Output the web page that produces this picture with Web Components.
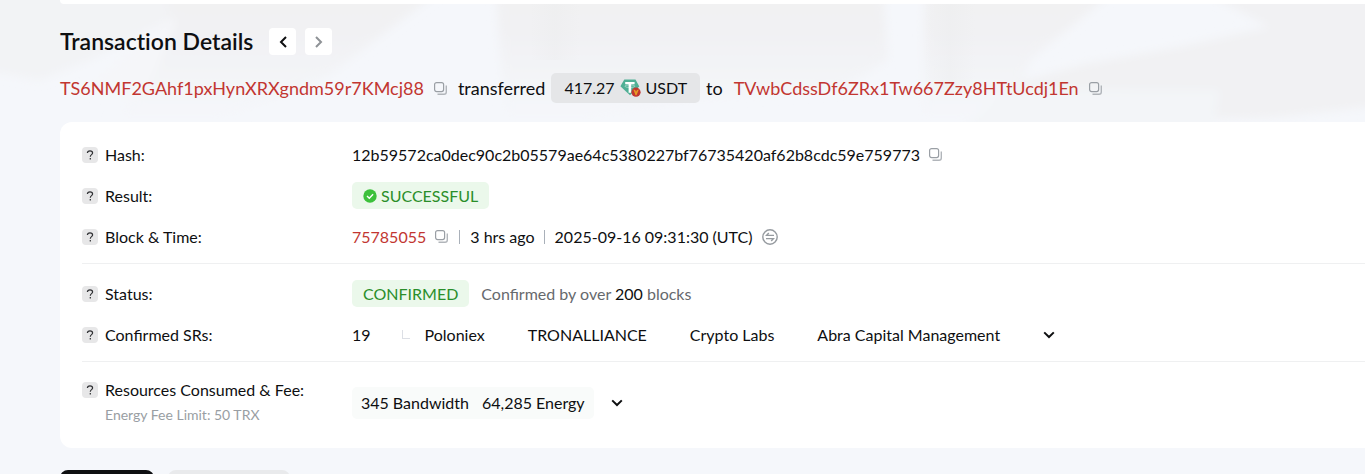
<!DOCTYPE html>
<html lang="en">
<head>
<meta charset="utf-8">
<meta name="viewport" content="width=device-width, initial-scale=1">
<title>Transaction Details</title>
<style>
	body {
		margin: 0;
		background: #f5f7fb;
		color: #0e0f11;
		font: 16px/24px Lato, "Liberation Sans", sans-serif;
	}
</style>
</head>
<body>
<tx-page>
	<tx-header slot="header" heading="Transaction Details">
		<tx-address>TS6NMF2GAhf1pxHynXRXgndm59r7KMcj88</tx-address>
		<span>transferred</span>
		<token-amount amount="417.27">USDT</token-amount>
		<span>to</span>
		<tx-address>TVwbCdssDf6ZRx1Tw667Zzy8HTtUcdj1En</tx-address>
	</tx-header>
	<detail-card>
		<detail-group>
			<detail-row label="Hash">
				<copy-text>12b59572ca0dec90c2b05579ae64c5380227bf76735420af62b8cdc59e759773</copy-text>
			</detail-row>
			<detail-row label="Result">
				<status-pill checked>SUCCESSFUL</status-pill>
			</detail-row>
			<detail-row label="Block &amp; Time">
				<block-time block="75785055" age="3 hrs ago">2025-09-16 09:31:30 (UTC)</block-time>
			</detail-row>
		</detail-group>
		<detail-group>
			<detail-row label="Status">
				<status-pill>CONFIRMED</status-pill>
				<confirm-note blocks="200"></confirm-note>
			</detail-row>
			<detail-row label="Confirmed SRs">
				<sr-list count="19" names="Poloniex,TRONALLIANCE,Crypto Labs,Abra Capital Management"></sr-list>
			</detail-row>
		</detail-group>
		<detail-group>
			<detail-row label="Resources Consumed &amp; Fee" note="Energy Fee Limit: 50 TRX">
				<resource-box bandwidth="345" energy="64,285"></resource-box>
			</detail-row>
		</detail-group>
	</detail-card>
	<tx-tabs slot="tabs"></tx-tabs>
</tx-page>

<script>
const buttonReset = `
	button {
		display: flex;
		align-items: center;
		justify-content: center;
		margin: 0;
		padding: 0;
		border: 0;
		background: none;
		color: inherit;
		font: inherit;
		cursor: pointer;
	}
	svg {
		display: block;
	}
`;

const chevronDown = `<svg width="12" height="8" viewBox="0 0 12 8" fill="none" stroke="#0e0f11" stroke-width="2"><path d="M1.2 1.4 6 6l4.8-4.6"/></svg>`;

class TxElement extends HTMLElement {
	constructor() {
		super();
		this.attachShadow({ mode: "open" });
	}

	connectedCallback() {
		this.shadowRoot.innerHTML = `<style>${buttonReset}${this.style_()}</style>${this.content()}`;
	}

	attr(name) {
		return (this.getAttribute(name) ?? "").replace(/&/g, "&amp;");
	}
}

class TxPage extends TxElement {
	style_() {
		return `
			:host {
				display: block;
				position: relative;
				box-sizing: border-box;
				height: 100vh;
				padding-left: 60px;
				overflow: hidden;
			}
			.backdrop {
				position: absolute;
				top: 0;
				left: 0;
				width: 100%;
				height: 122px;
				z-index: -1;
			}
			.menu {
				height: 4px;
				background: #fff;
				border-radius: 0 0 0 4px;
			}
		`;
	}

	content() {
		return `
			<svg class="backdrop" viewBox="0 0 1365 122" preserveAspectRatio="none" aria-hidden="true">
				<defs>
					<linearGradient id="down" x2="0" y2="1">
						<stop offset="0" stop-color="#f1f1f2"/>
						<stop offset=".35" stop-color="#f1f1f3"/>
						<stop offset="1" stop-color="#f5f7fb"/>
					</linearGradient>
					<linearGradient id="edge">
						<stop offset="0" stop-color="#ebeced" stop-opacity="0"/>
						<stop offset=".5" stop-color="#ebeced"/>
						<stop offset="1" stop-color="#ebeced" stop-opacity="0"/>
					</linearGradient>
					<filter id="soft"><feGaussianBlur stdDeviation="5"/></filter>
				</defs>
				<rect width="1365" height="122" fill="#f5f7fb"/>
				<g filter="url(#soft)">
					<path d="M-20-20H190L165 22 90 60 40 80-20 70z" fill="#f2f3f5"/>
					<path d="M165-20H455L375 40 330 75 220 122H110L150 80 170 30z" fill="url(#down)"/>
					<path d="M160 25 178 18 158 65 140 100 85 90z" fill="#f5f6f9"/>
					<path d="M495-20H882L888 60 840 90 690 100 590 122H505z" fill="url(#down)"/>
					<path d="M925-20H1128L1030 60 1010 122H922z" fill="url(#down)"/>
					<path d="M1180-20H1385V105L1270 118 1000 122 1010 85 1085 64 1180 47 1270 27z" fill="#f1f1f3"/>
					<path d="M1010 88 1220 90 1210 140H950z" fill="#f3f5f8"/>
				</g>
				<rect x="530" width="50" height="60" fill="url(#edge)" opacity=".4"/>
				<rect x="925" width="50" height="90" fill="url(#edge)" opacity=".4"/>
			</svg>
			<div class="menu"></div>
			<slot name="header"></slot>
			<slot></slot>
			<slot name="tabs"></slot>
		`;
	}
}

class TxHeader extends TxElement {
	style_() {
		return `
			:host {
				display: block;
				padding: 24px 0 19px;
			}
			.title {
				display: flex;
				align-items: center;
				gap: 9px;
			}
			h1 {
				margin: 0 7px 0 0;
				font-size: 23px;
				font-weight: 600;
				font-variant-ligatures: none;
				line-height: 27px;
			}
			.title button {
				width: 27px;
				height: 27px;
				border-radius: 4px;
				background: #fff;
			}
			.transfer {
				display: flex;
				align-items: center;
				margin-top: 18px;
				font-size: 18px;
				line-height: 30px;
				gap: 6px;
			}
			::slotted(span) {
				white-space: nowrap;
			}
		`;
	}

	content() {
		return `
			<div class="title">
				<h1>${this.attr("heading")}</h1>
				<button aria-label="Previous transaction">
					<svg width="8" height="12" viewBox="0 0 8 12" fill="none" stroke="#0e0f11" stroke-width="2"><path d="M7 1 2 6l5 5"/></svg>
				</button>
				<button aria-label="Next transaction">
					<svg width="8" height="12" viewBox="0 0 8 12" fill="none" stroke="#8e9296" stroke-width="2"><path d="m1 1 5 5-5 5"/></svg>
				</button>
			</div>
			<div class="transfer"><slot></slot></div>
		`;
	}
}

class CopyButton extends TxElement {
	style_() {
		return `
			:host {
				display: inline-flex;
			}
		`;
	}

	content() {
		return `<button aria-label="Copy">
			<svg width="13" height="13" viewBox="0 0 13 13" fill="none" stroke="#9a9fa5">
				<rect x=".6" y=".6" width="9" height="9" rx="2" stroke-width="1.2"/>
				<path d="M12.3 3.5V10a2.3 2.3 0 0 1-2.3 2.3H3.5" stroke="#b1b5ba" stroke-width="1.4"/>
			</svg>
		</button>`;
	}
}

class TxAddress extends TxElement {
	style_() {
		return `
			:host {
				display: flex;
				align-items: center;
				gap: 10px;
				margin-right: 5px;
			}
			:host(:last-of-type) {
				margin-left: 5px;
			}
			a {
				color: #c23631;
				text-decoration: none;
			}
		`;
	}

	content() {
		return `<a href="#"><slot></slot></a><copy-button></copy-button>`;
	}
}

class TokenAmount extends TxElement {
	style_() {
		return `
			:host {
				display: flex;
				align-items: center;
				gap: 5px;
				padding: 0 13px;
				border-radius: 5px;
				background: #e5e6e8;
				font-size: 16px;
			}
			a {
				color: inherit;
				text-decoration: none;
			}
		`;
	}

	content() {
		return `
			<span>${this.attr("amount")}</span>
			<svg width="21" height="18" viewBox="0 0 21 18">
				<path d="M4.3.6h11.2l3.8 6.8L10 16.2.4 7.2z" fill="#50af95"/>
				<path d="M5.2 3h9.4v2.3H11.2v8.4H8.6V5.3H5.2z" fill="#fff"/>
				<path d="M5 7.2c0 1.7 9.8 1.7 9.8 0S5 5.5 5 7.2z" fill="none" stroke="#fff" stroke-width=".6" opacity=".7"/>
				<circle cx="16" cy="13.2" r="4.6" fill="#c23631"/>
				<path d="m13.4 10.6 1.8.3.8 1.8 1-1.8 1.8-.4-2.3 5.8h-1z" fill="#e79b25"/>
			</svg>
			<a href="#"><slot></slot></a>
		`;
	}
}

class DetailCard extends TxElement {
	style_() {
		return `
			:host {
				display: block;
				padding: 3px 0 8px 22px;
				border-radius: 12px 0 0 12px;
				background: #fff;
			}
		`;
	}

	content() {
		return `<slot></slot>`;
	}
}

class DetailGroup extends TxElement {
	style_() {
		return `
			:host {
				display: flex;
				flex-direction: column;
				gap: 14px;
				padding: 16px 0 12px;
			}
			:host(:not(:last-of-type)) {
				padding-bottom: 13px;
				border-bottom: 1px solid #eff0f1;
			}
		`;
	}

	content() {
		return `<slot></slot>`;
	}
}

class DetailRow extends TxElement {
	style_() {
		return `
			:host {
				display: grid;
				grid-template-columns: 270px 1fr;
				align-items: center;
				min-height: 27px;
			}
			.label {
				display: grid;
				grid-template-columns: 16px auto;
				align-items: center;
				column-gap: 7px;
			}
			button {
				width: 16px;
				height: 16px;
				border-radius: 4px;
				background: #e7e7e8;
			}
			small {
				grid-column: 2;
				color: #999ea3;
				font-size: 14px;
				line-height: 26px;
			}
			.value {
				display: flex;
				align-items: center;
				gap: 12px;
				white-space: nowrap;
			}
		`;
	}

	content() {
		const note = this.attr("note");
		return `
			<div class="label">
				<button aria-label="Help">
					<svg width="8" height="10" viewBox="0 0 8 10" fill="none" stroke="#303134" stroke-width="1.2"><path d="M1.4 3.1C1.4 1.6 2.5.8 4 .8s2.6.8 2.6 2.2c0 1.7-2.3 1.6-2.3 3.7M4.3 8v1.4"/></svg>
				</button>
				<span>${this.attr("label")}:</span>
				${note && `<small>${note}</small>`}
			</div>
			<div class="value"><slot></slot></div>
		`;
	}
}

class CopyText extends TxElement {
	style_() {
		return `
			:host {
				display: flex;
				align-items: center;
				gap: 9px;
			}
		`;
	}

	content() {
		return `<span><slot></slot></span><copy-button></copy-button>`;
	}
}

class StatusPill extends TxElement {
	style_() {
		return `
			:host {
				display: flex;
				align-items: center;
				gap: 4px;
				padding: 0 11px;
				border-radius: 5px;
				background: #ebf8eb;
				color: #2a8e2a;
				line-height: 27px;
			}
		`;
	}

	content() {
		const icon = `<svg width="14" height="14" viewBox="0 0 14 14" fill="none"><circle cx="7" cy="7" r="6.7" fill="#3cc13b"/><path d="m4 7 2.3 2.2L10.1 5.3" stroke="#fff" stroke-width="1.4"/></svg>`;
		return `${this.hasAttribute("checked") ? icon : ""}<span><slot></slot></span>`;
	}
}

class BlockTime extends TxElement {
	style_() {
		return `
			:host {
				display: flex;
				align-items: center;
				gap: 9px;
			}
			a {
				color: #c23631;
				text-decoration: none;
			}
			.time {
				padding-left: 11px;
				background: linear-gradient(#a9b0b9, #a9b0b9) no-repeat left center / 1px 14px;
			}
			.age {
				margin-left: 2px;
			}
		`;
	}

	content() {
		return `
			<a href="#">${this.attr("block")}</a>
			<copy-button></copy-button>
			<span class="time age">${this.attr("age")}</span>
			<span class="time"><slot></slot></span>
			<button aria-label="Switch time zone">
				<svg width="16" height="16" viewBox="0 0 16 16" fill="none" stroke="#969ba0" stroke-width="1.4">
					<circle cx="8" cy="8" r="7.2"/>
					<path d="M12 6.4H4.6L6.8 4M4 9.6h7.4L9.2 12"/>
				</svg>
			</button>
		`;
	}
}

class ConfirmNote extends TxElement {
	style_() {
		return `
			:host {
				color: #66696d;
			}
			b {
				color: #0e0f11;
				font-weight: 400;
			}
		`;
	}

	content() {
		return `Confirmed by over <b>${this.attr("blocks")}</b> blocks`;
	}
}

class SrList extends TxElement {
	style_() {
		return `
			:host {
				display: flex;
				align-items: center;
				gap: 43px;
			}
			.first {
				display: flex;
				align-items: center;
				gap: 15px;
			}
			i {
				box-sizing: border-box;
				width: 8px;
				height: 9px;
				margin-left: 16px;
				border: solid #dcdfe5;
				border-width: 0 0 1px 1px;
			}
			a {
				color: inherit;
				text-decoration: none;
			}
		`;
	}

	content() {
		const [first, ...rest] = this.attr("names").split(",");
		return `
			<span class="first">${this.attr("count")}<i></i><a href="#">${first}</a></span>
			${rest.map((name) => `<a href="#">${name}</a>`).join("")}
			<button aria-label="Show all SRs">${chevronDown}</button>
		`;
	}
}

class ResourceBox extends TxElement {
	style_() {
		return `
			:host {
				display: flex;
				align-items: center;
				gap: 17px;
			}
			.box {
				display: flex;
				gap: 13px;
				padding: 0 9px;
				border-radius: 5px;
				background: #f9fbfa;
				line-height: 32px;
			}
			.box span {
				display: flex;
				gap: 4px;
			}
		`;
	}

	content() {
		return `
			<div class="box">
				<span>${this.attr("bandwidth")} <span>Bandwidth</span></span>
				<span>${this.attr("energy")} <span>Energy</span></span>
			</div>
			<button aria-label="Show resource details">${chevronDown}</button>
		`;
	}
}

class TxTabs extends TxElement {
	style_() {
		return `
			:host {
				display: flex;
				gap: 14px;
				margin-top: 22px;
			}
			button {
				width: 94px;
				height: 36px;
				border-radius: 8px;
				background: #e9eaec;
			}
			button + button {
				width: 122px;
			}
			button[aria-selected="true"] {
				background: #0e0f11;
			}
		`;
	}

	content() {
		return `
			<button role="tab" aria-selected="true" aria-label="Overview"></button>
			<button role="tab" aria-selected="false" aria-label="Event Logs"></button>
		`;
	}
}

customElements.define("tx-page", TxPage);
customElements.define("tx-header", TxHeader);
customElements.define("copy-button", CopyButton);
customElements.define("tx-address", TxAddress);
customElements.define("token-amount", TokenAmount);
customElements.define("detail-card", DetailCard);
customElements.define("detail-group", DetailGroup);
customElements.define("detail-row", DetailRow);
customElements.define("copy-text", CopyText);
customElements.define("status-pill", StatusPill);
customElements.define("block-time", BlockTime);
customElements.define("confirm-note", ConfirmNote);
customElements.define("sr-list", SrList);
customElements.define("resource-box", ResourceBox);
customElements.define("tx-tabs", TxTabs);
</script>
</body>
</html>
